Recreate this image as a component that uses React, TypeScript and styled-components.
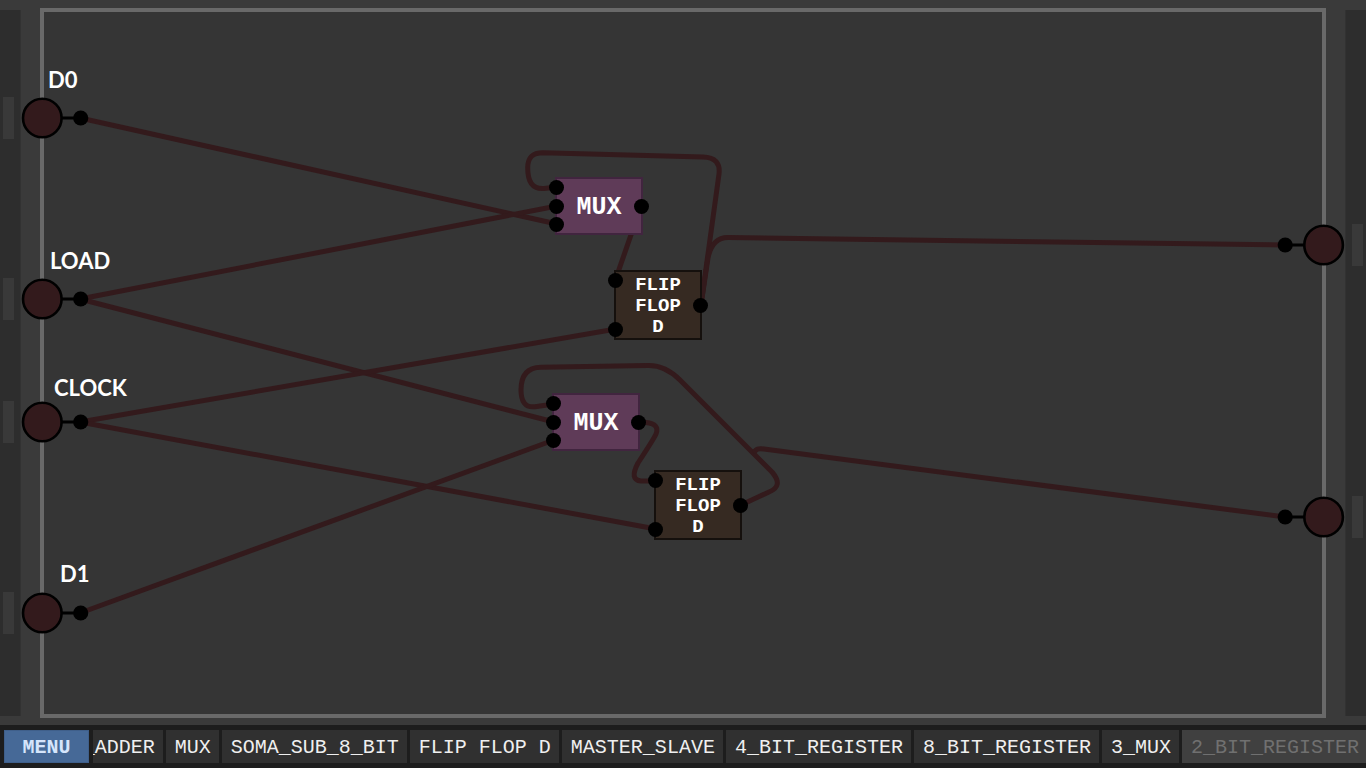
import React from "react";
import styled, { createGlobalStyle } from "styled-components";

const GlobalStyle = createGlobalStyle`
  * { box-sizing: border-box; }
  body { margin: 0; background: #1d1d1d; }
`;

const mono = `"Liberation Mono", "Courier New", monospace`;
const wireColor = "#331a1c";

const Page = styled.div`
  display: flex;
  flex-direction: column;
  min-height: 100vh;
  font-family: ${mono};
`;

const Stage = styled.main`
  position: relative;
  flex: 1;
  display: flex;
  gap: 19px;
  padding: 8px 0 7px;
  background: #3a3a3a;
  overflow: hidden;
`;

const Rail = styled.div<{ $side: "left" | "right" }>`
  position: relative;
  width: 21px;
  margin: 2px 0;
  background: #2d2d2d;
  border: solid #323232;
  border-width: ${(p) => (p.$side === "left" ? "0 1px 0 0" : "0 0 0 1px")};
`;

const Slot = styled.div<{ $y: number; $side: "left" | "right" }>`
  position: absolute;
  ${(p) => p.$side}: 3px;
  top: ${(p) => p.$y - 31}px;
  width: 11px;
  height: 42px;
  background: #393939;
`;

const Board = styled.div`
  flex: 1;
  border: 4px solid #696969;
  background: #353535;
`;

const Canvas = styled.div`
  position: absolute;
  inset: 0;
`;

const Drawing = styled.svg`
  display: block;
  width: 100%;
  height: 100%;
`;

const NetLabel = styled.span<{ $x: number; $y: number }>`
  position: absolute;
  left: ${(p) => p.$x}px;
  top: ${(p) => p.$y}px;
  color: #fff;
  font: 700 22px/32px Lato, "Open Sans", sans-serif;
`;

const Chip = styled.div<{ $x: number; $y: number; $kind: "mux" | "flip" }>`
  position: absolute;
  left: ${(p) => p.$x}px;
  top: ${(p) => p.$y}px;
  display: flex;
  align-items: center;
  justify-content: center;
  width: 88px;
  height: ${(p) => (p.$kind === "mux" ? 58 : 70)}px;
  padding-top: 2px;
  border: 2px solid ${(p) => (p.$kind === "mux" ? "#41253f" : "#15100d")};
  background: ${(p) => (p.$kind === "mux" ? "#5f3b58" : "#362a22")};
  color: #fff;
  font-weight: 700;
  font-size: ${(p) => (p.$kind === "mux" ? 25 : 19)}px;
  line-height: 21px;
  text-align: center;
`;

const ChipName = styled.span`
  width: min-content;
`;

const Pins = styled.div<{ $side: "left" | "right" }>`
  position: absolute;
  ${(p) => p.$side}: -8px;
  top: 1px;
  bottom: 1px;
  display: flex;
  flex-direction: column;
  justify-content: ${(p) => (p.$side === "left" ? "space-between" : "center")};
`;

const Pin = styled.i`
  width: 15px;
  height: 15px;
  border-radius: 50%;
  background: #000;
`;

const Toolbar = styled.nav`
  display: flex;
  gap: 4px;
  padding: 5px 0 5px 4px;
  background: #1d1d1d;
`;

const MenuButton = styled.button`
  flex: none;
  width: 85px;
  height: 33px;
  padding: 2px 0 0;
  border: 1px solid #3f5f8a;
  background: #466997;
  color: #d5e5fb;
  font: 700 20px/24px ${mono};
`;

const ChipList = styled.div`
  flex: 1;
  min-width: 0;
  display: flex;
  justify-content: flex-end;
  gap: 3px;
  margin-right: -1px;
  overflow: hidden;
`;

const ChipButton = styled.button`
  flex: none;
  height: 33px;
  padding: 2px 8px 0 9px;
  border: 0;
  background: #303030;
  color: #efefef;
  font: 400 20px/24px ${mono};
  white-space: nowrap;

  &:disabled { background: #404040; color: #707070; }
`;

const inputs = [
  { name: "D0", y: 118, x: 48, top: 64 },
  { name: "LOAD", y: 299, x: 50, top: 245 },
  { name: "CLOCK", y: 422, x: 54, top: 372 },
  { name: "D1", y: 613, x: 60, top: 558 },
];

const outputs = [245, 517];

const wires = [
  "M80 118 L557 224",
  "M80 299 L557 206",
  "M80 299 L554 422",
  "M80 422 L616 329",
  "M80 422 L656 529",
  "M80 613 L554 440",
  "M557 187 L544 188.500 C532 189.500 527.700 181 527.700 168 C527.700 157 533 152.700 543 152.700 L703 157 Q721 157.500 719 174 L701 305",
  "M701 305 L708 258 Q712 237.500 728 237.500 L1285 245",
  "M641 206 L615 281",
  "M554 404 L535 406.700 C525 408 521 401 521 390 C521 376 527 367.500 541 367.300 L648 365.500 Q665 365 680 380 L772 472 Q784 486 769 492 L741 505",
  "M755 451 Q757 448 764 449 L1285 517",
  "M638 422 L646 422.500 Q660 424 656 434 Q655 437 638 463 Q629 480 641 481 L656 481",
];

const chips = [
  { kind: "mux", name: "MUX", x: 555, y: 177 },
  { kind: "mux", name: "MUX", x: 552, y: 393 },
  { kind: "flip", name: "FLIP FLOP D", x: 614, y: 270 },
  { kind: "flip", name: "FLIP FLOP D", x: 654, y: 470 },
] as const;

const library = [
  "_ADDER",
  "MUX",
  "SOMA_SUB_8_BIT",
  "FLIP FLOP D",
  "MASTER_SLAVE",
  "4_BIT_REGISTER",
  "8_BIT_REGISTER",
  "3_MUX",
];

function Terminal({ cx, dot, y }: { cx: number; dot: number; y: number }) {
  return (
    <g>
      <path d={`M${cx} ${y} H${dot}`} stroke="#000" strokeWidth="3" />
      <circle cx={cx} cy={y} r="19.3" fill={wireColor} stroke="#000" strokeWidth="2.600" />
      <circle cx={dot} cy={y} r="7.600" fill="#000" />
    </g>
  );
}

export default function App() {
  return (
    <Page>
      <GlobalStyle />
      <Stage>
        <Rail $side="left">
          {inputs.map((i) => (
            <Slot key={i.name} $side="left" $y={i.y} />
          ))}
        </Rail>
        <Board />
        <Rail $side="right">
          {outputs.map((y) => (
            <Slot key={y} $side="right" $y={y} />
          ))}
        </Rail>
        <Canvas>
          <Drawing>
            <g fill="none" stroke={wireColor} strokeWidth="5" strokeLinecap="round" strokeLinejoin="round">
              {wires.map((d) => (
                <path key={d} d={d} />
              ))}
            </g>
            {inputs.map((i) => (
              <Terminal key={i.name} cx={42.3} dot={80.7} y={i.y} />
            ))}
            {outputs.map((y) => (
              <Terminal key={y} cx={1323.6} dot={1285.2} y={y} />
            ))}
          </Drawing>
          {inputs.map((i) => (
            <NetLabel key={i.name} $x={i.x} $y={i.top}>
              {i.name}
            </NetLabel>
          ))}
          {chips.map((c) => (
            <Chip key={`${c.x}-${c.y}`} $kind={c.kind} $x={c.x} $y={c.y}>
              <ChipName>{c.name}</ChipName>
              <Pins $side="left">
                <Pin />
                {c.kind === "mux" && <Pin />}
                <Pin />
              </Pins>
              <Pins $side="right">
                <Pin />
              </Pins>
            </Chip>
          ))}
        </Canvas>
      </Stage>
      <Toolbar>
        <MenuButton>MENU</MenuButton>
        <ChipList>
          {library.map((name) => (
            <ChipButton key={name}>{name}</ChipButton>
          ))}
          <ChipButton disabled>2_BIT_REGISTER</ChipButton>
        </ChipList>
      </Toolbar>
    </Page>
  );
}
